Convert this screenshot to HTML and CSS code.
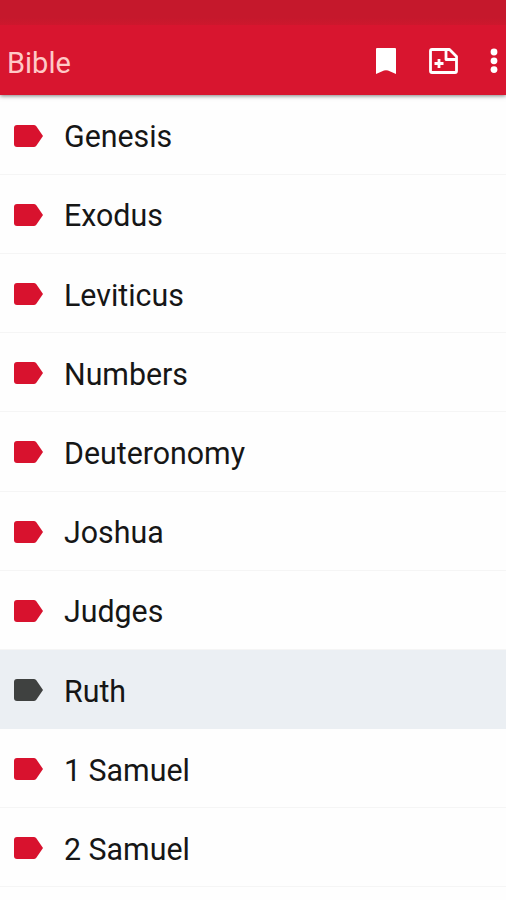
FILE: index.html
```html
<!DOCTYPE html>
<html lang="en">
<head>
<meta charset="utf-8">
<title>Bible</title>
<link rel="stylesheet" href="styles.css">
</head>
<body>
<svg width="0" height="0" class="defs" aria-hidden="true">
  <symbol id="tag" viewBox="0 0 29 22"><path d="M3 0H19.7Q21.3 0 22.3 1.3L29 11L22.3 20.7Q21.3 22 19.7 22H3Q0 22 0 19V3Q0 0 3 0Z"/></symbol>
</svg>
<header class="top">
  <div class="status"></div>
  <div class="bar">
    <h1 class="title">Bible</h1>
    <svg class="bookmark" viewBox="0 0 20 26"><path d="M1 0H19Q20 0 20 1V26L12 22.6Q10 21.8 8 22.6L0 26V1Q0 0 1 0Z" fill="#fff"/></svg>
    <svg class="note" viewBox="0 0 30 26"><path d="M3 1.5H20.5L27.5 8.5V23Q27.5 24.5 26 24.5H3Q1.5 24.5 1.5 23V3Q1.5 1.5 3 1.5ZM17 2V11.5H27M10 11V20M5.5 15.5H14.5" fill="none" stroke="#fff" stroke-width="2.8" stroke-linejoin="round"/></svg>
    <svg class="more" viewBox="0 0 8 26"><g fill="#fff"><circle cx="4" cy="4" r="3.4"/><circle cx="4" cy="12.8" r="3.4"/><circle cx="4" cy="21.6" r="3.4"/></g></svg>
  </div>
</header>
<ul class="books">
  <li class="book"><svg class="tag"><use href="#tag"/></svg><span class="name">Genesis</span></li>
  <li class="book"><svg class="tag"><use href="#tag"/></svg><span class="name">Exodus</span></li>
  <li class="book"><svg class="tag"><use href="#tag"/></svg><span class="name">Leviticus</span></li>
  <li class="book"><svg class="tag"><use href="#tag"/></svg><span class="name">Numbers</span></li>
  <li class="book"><svg class="tag"><use href="#tag"/></svg><span class="name">Deuteronomy</span></li>
  <li class="book"><svg class="tag"><use href="#tag"/></svg><span class="name">Joshua</span></li>
  <li class="book"><svg class="tag"><use href="#tag"/></svg><span class="name">Judges</span></li>
  <li class="book selected"><svg class="tag"><use href="#tag"/></svg><span class="name">Ruth</span></li>
  <li class="book"><svg class="tag"><use href="#tag"/></svg><span class="name">1 Samuel</span></li>
  <li class="book"><svg class="tag"><use href="#tag"/></svg><span class="name">2 Samuel</span></li>
</ul>
</body>
</html>
```
FILE: styles.css
```css
* { box-sizing: border-box; }
body { margin: 0; height: 900px; overflow: hidden; background: #fefefe; font-family: Roboto, sans-serif; }
.defs { display: none; }
.top { position: relative; height: 95px; background: #d8152f; box-shadow: 0 1px 4px rgba(0,0,0,.5); }
.status { height: 25px; background: linear-gradient(#c5182c 70%, #cd172d); }
.bar { height: 70px; display: flex; align-items: flex-start; padding: 23px 8px 0 7px; }
.title { margin: -2px auto 0 0; font-size: 29px; line-height: 34px; font-weight: 400; color: #ffc9c7; }
.bookmark { width: 20px; height: 26px; margin-right: 33px; }
.note { width: 30px; height: 26px; margin-right: 31px; }
.more { width: 8px; height: 26px; }
.books { list-style: none; margin: 0; padding: .6px 0 0; }
.book { height: 79.2px; display: flex; align-items: center; gap: 21px; padding: 3px 0 0 14px; border-bottom: 1px solid #f5f5f5; font-size: 32px; line-height: 38px; font-weight: 400; color: #161616; }
.name { transform: scaleX(.948); transform-origin: 0 50%; }
.tag { width: 29px; height: 22px; fill: #d8122e; margin-top: -1.2px; }
.selected { background: #ebeff3; border-bottom-color: #ebeff3; }
.selected .tag { fill: #3f4140; }
```
